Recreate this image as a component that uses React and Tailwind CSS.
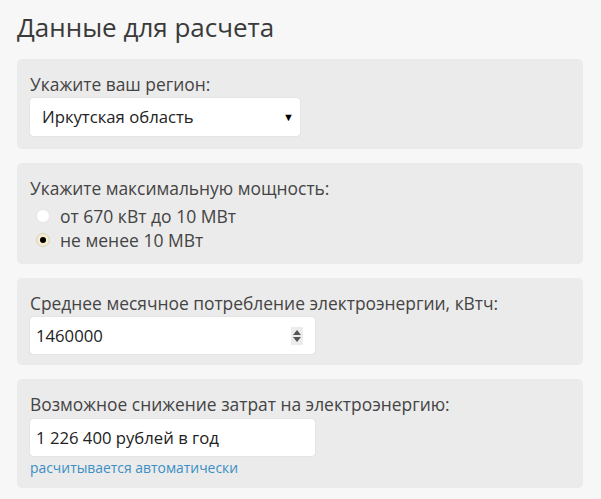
export default function App() {
  return (
    <div className="min-h-[499px] bg-[#f7f7f7] pl-[17px] pr-[18px] pt-[12px] pb-[11px] font-['Open_Sans',sans-serif] text-[#444]">
      <h1 className="text-[26px] leading-[30px] text-[#3a3a3a] mb-[17px]">Данные для расчета</h1>

      <div className="flex flex-col gap-[14px]">
        <div className="bg-[#ebebeb] rounded-[5px] px-[13px] pt-[14px] pb-[13px]">
          <div className="text-[17.4px] leading-[22px]">Укажите ваш регион:</div>
          <div className="mt-[3px] w-[270px] h-[38px] bg-white rounded-[3px] shadow-[0_0_1px_rgba(0,0,0,0.25)] flex items-center justify-between pl-[12px] pr-[6px] text-[16.7px] text-[#222]">
            <span>Иркутская область</span>
            <span className="text-[11px] text-black">▼</span>
          </div>
        </div>

        <div className="bg-[#ebebeb] rounded-[5px] px-[13px] pt-[14px] pb-[12px]">
          <div className="text-[17.4px] leading-[22px]">Укажите максимальную мощность:</div>
          <div className="mt-[5px] flex flex-col">
            <label className="h-[24px] flex items-center gap-[10px] pl-[6px] text-[17.5px]">
              <span className="w-[14px] h-[14px] rounded-full bg-white border border-[#e6e6e6]" />
              <span>от 670 кВт до 10 МВт</span>
            </label>
            <label className="h-[24px] flex items-center gap-[10px] pl-[6px] text-[17.5px]">
              <span className="w-[14px] h-[14px] rounded-full bg-[#f6ecd2] border border-[#d8d0bc] flex items-center justify-center">
                <span className="w-[6px] h-[6px] rounded-full bg-black" />
              </span>
              <span>не менее 10 МВт</span>
            </label>
          </div>
        </div>

        <div className="bg-[#ebebeb] rounded-[5px] px-[13px] pt-[14px] pb-[11px]">
          <div className="text-[17.4px] leading-[22px]">Среднее месячное потребление электроэнергии, кВтч:</div>
          <div className="mt-[3px] w-[285px] h-[37px] bg-white rounded-[3px] shadow-[0_0_1px_rgba(0,0,0,0.25)] flex items-center justify-between pl-[6px] pr-[12px] text-[16.7px] text-[#222]">
            <span>1460000</span>
            <span className="w-[12px] h-[18px] bg-[#ececec] flex flex-col items-center justify-center gap-[2px]">
              <svg width="8" height="5" viewBox="0 0 8 5"><path d="M4 0L8 5H0Z" fill="#555" /></svg>
              <svg width="8" height="5" viewBox="0 0 8 5"><path d="M0 0H8L4 5Z" fill="#555" /></svg>
            </span>
          </div>
        </div>

        <div className="bg-[#ebebeb] rounded-[5px] px-[13px] pt-[14px] pb-[10px]">
          <div className="text-[17.4px] leading-[22px]">Возможное снижение затрат на электроэнергию:</div>
          <div className="mt-[4px] w-[285px] h-[37px] bg-white rounded-[3px] shadow-[0_0_1px_rgba(0,0,0,0.25)] flex items-center pl-[6px] text-[16.7px] text-[#222]">
            1 226 400 рублей в год
          </div>
          <div className="mt-[2px] text-[13.9px] leading-[20px] text-[#3c8fc4]">расчитывается автоматически</div>
        </div>
      </div>
    </div>
  );
}
